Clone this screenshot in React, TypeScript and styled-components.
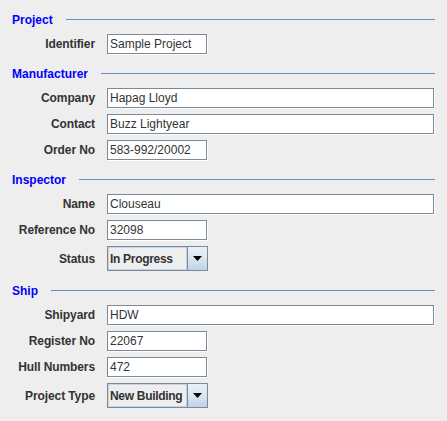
import React from "react";
import styled, { createGlobalStyle } from "styled-components";

const GlobalStyle = createGlobalStyle`
  html, body { margin: 0; padding: 0; background: #eeeeee; }
  * { box-sizing: border-box; }
`;

const Page = styled.div`
  width: 447px;
  min-height: 421px;
  background: #eeeeee;
  padding: 12px 12px 0 12px;
  font-family: "Liberation Sans", Arial, sans-serif;
  font-size: 12px;
`;

const Section = styled.section`
  & + & {
    margin-top: 12px;
  }
`;

const SectionHeader = styled.div`
  display: flex;
  align-items: flex-start;
  height: 14px;
  gap: 13px;
`;

const SectionTitle = styled.span`
  color: #0000ff;
  font-weight: bold;
  font-size: 12px;
  line-height: 14px;
  padding-top: 1px;
`;

const Rule = styled.div`
  flex: 1;
  height: 0;
  margin-top: 7px;
  border-top: 1px solid #6f8cc4;
`;

const Grid = styled.div`
  display: grid;
  grid-template-columns: 83px 1fr;
  column-gap: 12px;
  row-gap: 6px;
  margin-top: 8px;
  align-items: center;
`;

const Label = styled.label`
  text-align: right;
  font-weight: bold;
  color: #333333;
  font-size: 12px;
  line-height: 14px;
  letter-spacing: -0.1px;
  white-space: nowrap;
`;

const Field = styled.input<{ $wide?: boolean }>`
  justify-self: ${(p) => (p.$wide ? "stretch" : "start")};
  width: ${(p) => (p.$wide ? "auto" : "100px")};
  margin: 0 ${(p) => (p.$wide ? "1px" : "0")} 0 0;
  height: 20px;
  border: 1px solid #7a8a99;
  box-shadow: 1px 1px 0 #ffffff;
  background: #ffffff;
  padding: 0 2px;
  font-family: "Liberation Sans", Arial, sans-serif;
  font-size: 12px;
  color: #333333;
  outline: none;
  border-radius: 0;
`;

const Combo = styled.div`
  justify-self: start;
  display: flex;
  width: 101px;
  height: 25px;
  border: 1px solid #7a8a99;
`;

const ComboValue = styled.div`
  flex: 1;
  display: flex;
  align-items: center;
  padding-left: 2px;
  background: #eeeeee;
  box-shadow: inset 0 0 0 1px #c4d4e5;
  font-weight: bold;
  font-size: 12px;
  letter-spacing: -0.3px;
  color: #333333;
  white-space: nowrap;
  overflow: hidden;
`;

const ComboButton = styled.div`
  width: 20px;
  display: flex;
  align-items: center;
  justify-content: center;
  border-left: 1px solid #7a8a99;
  background: linear-gradient(to bottom, #e9f0f8 0%, #dce7f2 45%, #bfd2e7 100%);
`;

type Row =
  | { label: string; value: string; kind: "field"; wide?: boolean }
  | { label: string; value: string; kind: "combo" };

const sections: { title: string; rows: Row[] }[] = [
  {
    title: "Project",
    rows: [{ label: "Identifier", value: "Sample Project", kind: "field" }],
  },
  {
    title: "Manufacturer",
    rows: [
      { label: "Company", value: "Hapag Lloyd", kind: "field", wide: true },
      { label: "Contact", value: "Buzz Lightyear", kind: "field", wide: true },
      { label: "Order No", value: "583-992/20002", kind: "field" },
    ],
  },
  {
    title: "Inspector",
    rows: [
      { label: "Name", value: "Clouseau", kind: "field", wide: true },
      { label: "Reference No", value: "32098", kind: "field" },
      { label: "Status", value: "In Progress", kind: "combo" },
    ],
  },
  {
    title: "Ship",
    rows: [
      { label: "Shipyard", value: "HDW", kind: "field", wide: true },
      { label: "Register No", value: "22067", kind: "field" },
      { label: "Hull Numbers", value: "472", kind: "field" },
      { label: "Project Type", value: "New Building", kind: "combo" },
    ],
  },
];

const Arrow = () => (
  <svg width="9" height="5" viewBox="0 0 9 5">
    <path d="M0 0 H9 L4.5 5 Z" fill="#000000" />
  </svg>
);

export default function App() {
  return (
    <>
      <GlobalStyle />
      <Page>
        {sections.map((s) => (
          <Section key={s.title}>
            <SectionHeader>
              <SectionTitle>{s.title}</SectionTitle>
              <Rule />
            </SectionHeader>
            <Grid>
              {s.rows.map((r) => (
                <React.Fragment key={r.label}>
                  <Label>{r.label}</Label>
                  {r.kind === "field" ? (
                    <Field $wide={r.wide} readOnly defaultValue={r.value} />
                  ) : (
                    <Combo>
                      <ComboValue>{r.value}</ComboValue>
                      <ComboButton>
                        <Arrow />
                      </ComboButton>
                    </Combo>
                  )}
                </React.Fragment>
              ))}
            </Grid>
          </Section>
        ))}
      </Page>
    </>
  );
}
